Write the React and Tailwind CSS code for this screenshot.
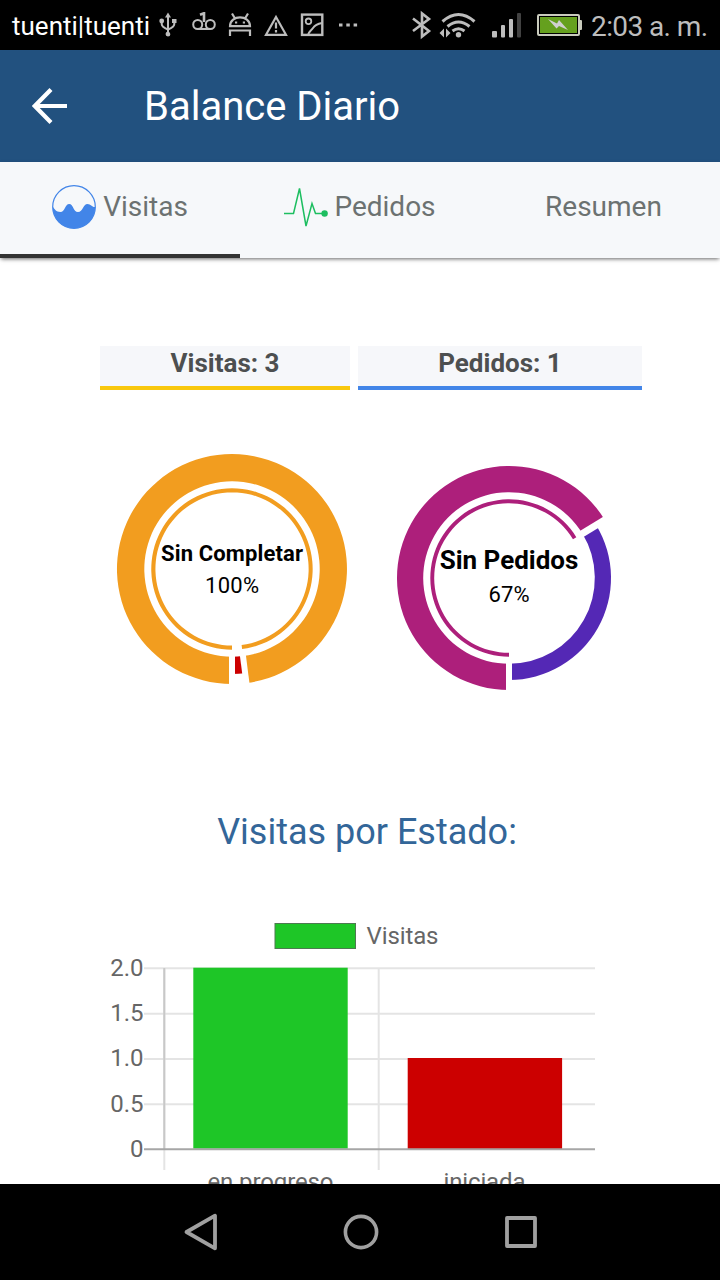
import React from "react";

const rad = (deg) => (deg * Math.PI) / 180;

// Angles are measured clockwise from twelve o'clock.
function point(cx, cy, r, deg) {
  return `${(cx + r * Math.sin(rad(deg))).toFixed(2)} ${(cy - r * Math.cos(rad(deg))).toFixed(2)}`;
}

function sector(cx, cy, inner, outer, from, to) {
  const large = to - from > 180 ? 1 : 0;
  return [
    `M${point(cx, cy, outer, from)}`,
    `A${outer} ${outer} 0 ${large} 1 ${point(cx, cy, outer, to)}`,
    `L${point(cx, cy, inner, to)}`,
    `A${inner} ${inner} 0 ${large} 0 ${point(cx, cy, inner, from)}Z`,
  ].join("");
}

function Cut({ cx, cy, deg, width }) {
  return (
    <path
      d={`M${point(cx, cy, 83, deg)}L${point(cx, cy, 120, deg)}`}
      stroke="#fff"
      strokeWidth={width}
    />
  );
}

function StatusBar() {
  return (
    <header className="flex h-[50px] shrink-0 items-center bg-black pl-3 pr-3 text-[#bdbdbd]">
      <span className="w-[144px] whitespace-nowrap pt-[2px] text-[26px] leading-[50px] text-white">
        tuenti|tuenti
      </span>
      <div className="flex gap-3">
        <svg width="24" height="50" viewBox="0 0 24 50" fill="none" stroke="currentColor" strokeWidth="2">
          <path d="M12 16v17M5.700 21v3q0 3 6.300 5.500M18.300 21v3q0 3-6.300 5.500" />
          <path d="M12 12.500l3 5H9zM16 19h4.500v4H16zM12 31.700a2.400 2.400 0 1 1-.1 4.800a2.400 2.400 0 0 1 .1-4.800" fill="currentColor" stroke="none" />
          <circle cx="5.700" cy="21" r="2.400" fill="currentColor" stroke="none" />
        </svg>
        <svg width="24" height="50" viewBox="0 0 24 50" fill="none" stroke="currentColor" strokeWidth="2">
          <circle cx="5.700" cy="24.500" r="4.500" />
          <circle cx="18.300" cy="24.500" r="4.500" />
          <path d="M5.700 29h12.600" />
          <path d="M8 14.800l3.800-1.500h.2V22" strokeWidth="2.600" />
        </svg>
        <svg width="24" height="50" viewBox="0 0 24 50" fill="none" stroke="currentColor" strokeWidth="2.200">
          <path d="M2 26.200C2 14.500 22 14.500 22 26.200zM4 13.500l3 5M20 13.500l-3 5M2 36v-5.500h20V36" />
          <path d="M7 22.500h2.200M14.800 22.500H17" />
        </svg>
        <svg width="24" height="50" viewBox="0 0 24 50" fill="none" stroke="currentColor" strokeWidth="2.200">
          <path d="M12 17L22 34.800H2zM12 22.500v6M12 30v2.500" />
        </svg>
        <svg width="24" height="50" viewBox="0 0 24 50" fill="none" stroke="currentColor" strokeWidth="2.400">
          <rect x="2" y="14.600" width="20.300" height="20.300" />
          <circle cx="8.500" cy="21.300" r="2.800" strokeWidth="1.800" />
          <path d="M8 35c1-4 3-4 5-7 2-3 4-4 9-5" strokeWidth="2" />
        </svg>
        <svg width="24" height="50" viewBox="0 0 24 50" fill="currentColor">
          <rect x="3" y="23.500" width="3.500" height="3" />
          <rect x="10.300" y="23.500" width="3.500" height="3" />
          <rect x="17.600" y="23.500" width="3.500" height="3" />
        </svg>
      </div>
      <div className="ml-auto flex items-center">
        <svg width="20" height="50" viewBox="0 0 20 50" fill="none" stroke="currentColor" strokeWidth="2.600">
          <path d="M1 18.500l16 12.500-7 5.500V13.500l7 5.500-16 12" />
        </svg>
        <svg className="ml-[7px]" width="38" height="50" viewBox="0 0 38 50" fill="none" stroke="currentColor" strokeWidth="3">
          <path d="M3.500 21.500q16-14 32 0M8.500 26.500q11-9 22 0M13.500 31q6-4.500 12 0" />
          <circle cx="19.500" cy="34.800" r="2.700" fill="currentColor" stroke="none" />
          <path d="M5 28.500v9l-4.500-4.500zM7 28.500v9l4.500-4.500z" fill="currentColor" stroke="none" />
        </svg>
        <svg className="ml-[14px]" width="31" height="50" viewBox="0 0 31 50" fill="currentColor">
          <rect x="1" y="31" width="5" height="6.500" rx="1" />
          <rect x="10" y="25" width="4" height="12.500" rx="1" />
          <rect x="18" y="19" width="4" height="18.500" rx="1" />
          <rect x="26" y="13" width="4" height="24.500" fill="#424242" rx="1" />
        </svg>
        <svg className="ml-[15px]" width="46" height="50" viewBox="0 0 46 50">
          <rect x="1" y="15" width="41" height="20" rx="1" fill="#000" stroke="#c9cbbd" strokeWidth="2" />
          <rect x="3" y="17" width="37" height="16" fill="#65a01e" />
          <rect x="42" y="20" width="3" height="10" rx="1" fill="#c9cbbd" />
          <path d="M11 19l9 4.500 2-3.500 9 10-9-4-2.500 2.500z" fill="#d0d0d0" />
        </svg>
        <span className="ml-[8px] w-[117px] whitespace-nowrap pt-[3px] text-[28px] leading-[48px] tracking-[-0.6px]">2:03 a. m.</span>
      </div>
    </header>
  );
}

function Tabs() {
  return (
    <nav className="z-10 flex h-24 shrink-0 bg-[#f6f8fa] text-[28px] leading-[88px] text-[#6c7271] shadow-[0_2px_4px_-1px_rgba(0,0,0,0.6)]">
      <a className="flex w-60 items-center justify-center gap-[7px] border-b-4 border-[#333] pb-[2px]">
        <svg width="44" height="44" viewBox="0 0 44 44">
          <circle cx="22" cy="22" r="21.300" fill="none" stroke="#4285e8" strokeWidth="1.200" />
          <path d="M.7 21.500C2.500 24 4 27 8.500 27C13 27 13 19 17.200 19C21.500 19 21 27 26 27C31 27 31 19 35.500 19C39 19 40 22.500 43.300 22A21.300 21.300 0 0 1 22 43.300A21.300 21.300 0 0 1 .7 21.500Z" fill="#4285e8" />
        </svg>
        <span>Visitas</span>
      </a>
      <a className="flex w-60 items-center justify-center gap-[6px] border-b-4 border-transparent pb-[2px]">
        <svg width="44" height="44" viewBox="0 0 44 44" fill="none" stroke="#1dbe60" strokeWidth="1.500">
          <path d="M0 28.500h9.500L15.500 3.500 22 41l6-22.500 3.500 10H40" />
          <circle cx="40.600" cy="28.500" r="3.200" fill="#1dbe60" stroke="none" />
        </svg>
        <span>Pedidos</span>
      </a>
      <a className="flex w-60 items-center justify-center border-b-4 border-transparent pb-[2px] pl-[7px]">
        <span>Resumen</span>
      </a>
    </nav>
  );
}

function Donuts() {
  return (
    <svg
      className="mt-[50px] block shrink-0"
      width="720"
      height="260"
      viewBox="0 440 720 260"
      textAnchor="middle"
      fontFamily="Roboto, sans-serif"
    >
      <path d={sector(232, 569, 87.7, 115, 180, 532.8)} fill="#f29d1f" />
      <path d={sector(232, 569, 87.7, 105, 172.8, 180)} fill="#cc0000" />
      <Cut cx={232} cy={569} deg={180} width={6} />
      <Cut cx={232} cy={569} deg={172.8} width={6} />
      <path d={sector(232, 569, 76.6, 80.7, 180, 532.8)} fill="#f29d1f" />
      <text x="232" y="561" fontSize="22" fontWeight="700" textLength="142">Sin Completar</text>
      <text x="232" y="593" fontSize="22" textLength="54">100%</text>

      <path d={sector(509, 578, 85.8, 112, 180, 418.8)} fill="#ad1f7b" />
      <path d={sector(509, 578, 85.8, 102, 58.8, 180)} fill="#5428b5" />
      <Cut cx={509} cy={578} deg={180} width={6} />
      <Cut cx={509} cy={578} deg={58.8} width={7} />
      <path d={sector(509, 578, 74.8, 78.7, 180, 418.8)} fill="#ad1f7b" />
      <text x="509" y="569" fontSize="26" fontWeight="700" textLength="138.500">Sin Pedidos</text>
      <text x="509" y="602" fontSize="22" textLength="41">67%</text>
    </svg>
  );
}

const ticks = [
  ["2.0", 968.3],
  ["1.5", 1013.7],
  ["1.0", 1058.9],
  ["0.5", 1104.2],
];

function BarChart() {
  return (
    <svg
      className="mt-[42px] block shrink-0"
      width="720"
      height="300"
      viewBox="0 900 720 300"
      fontFamily="Roboto, sans-serif"
      fontSize="24"
      fill="#666"
    >
      <rect x="275" y="923.500" width="80.500" height="25" fill="#1ec627" stroke="#4d7a50" />
      <text x="366.500" y="944" textLength="72">Visitas</text>
      <g stroke="#e4e4e4" strokeWidth="2">
        {ticks.map(([label, y]) => (
          <path key={label} d={`M144 ${y}H595`} />
        ))}
        <path d="M164.300 968V1170M378.700 968V1170" />
        <path d="M164.300 968V1149" stroke="#c8c8c8" />
      </g>
      <rect x="193.300" y="967.700" width="154.400" height="181" fill="#1ec627" />
      <rect x="407.700" y="1058" width="154.400" height="91" fill="#cc0000" />
      <path d="M144 1149.300H595" stroke="#a6a6a6" strokeWidth="2" />
      <g textAnchor="end">
        {ticks.map(([label, y]) => (
          <text key={label} x="143.500" y={y + 7.5}>{label}</text>
        ))}
        <text x="143.500" y="1156.800">0</text>
      </g>
      <g textAnchor="middle">
        <text x="270.500" y="1190" textLength="126">en progreso</text>
        <text x="484.500" y="1190" textLength="82">iniciada</text>
      </g>
    </svg>
  );
}

function NavBar() {
  return (
    <footer className="flex h-24 shrink-0 items-center bg-black pl-[183px] text-[#a0a0a0]">
      <svg width="36" height="40" viewBox="0 0 36 40" fill="none" stroke="currentColor" strokeWidth="3.800" strokeLinejoin="round">
        <path d="M3.500 20L32 3.700v32.600z" />
      </svg>
      <svg className="ml-[124px]" width="36" height="40" viewBox="0 0 36 40" fill="none" stroke="currentColor" strokeWidth="3.600">
        <circle cx="18" cy="20" r="15.600" />
      </svg>
      <svg className="ml-[124px]" width="36" height="40" viewBox="0 0 36 40" fill="none" stroke="currentColor" strokeWidth="3.800" strokeLinejoin="round">
        <rect x="4" y="6" width="28" height="28" />
      </svg>
    </footer>
  );
}

export default function App() {
  return (
    <div className="flex h-[1280px] w-[720px] flex-col overflow-hidden bg-white font-[Roboto,sans-serif]">
      <StatusBar />
      <div className="flex h-28 shrink-0 items-center bg-[#22517f] pl-8 text-white">
        <svg width="36" height="40" viewBox="0 0 36 40" fill="none" stroke="currentColor" strokeWidth="4.200">
          <path d="M3 20h32M19 3.500L2.800 20 19 36.500" />
        </svg>
        <h1 className="ml-[76px] pt-[2px] text-[40px] leading-[48px]">Balance Diario</h1>
      </div>
      <Tabs />
      <main className="flex min-h-0 flex-1 flex-col overflow-hidden pt-[88px]">
        <div className="flex gap-2 pl-[100px] text-center text-[26px] font-bold leading-[34px] text-[#4d4f50]">
          <div className="h-11 w-[250px] shrink-0 border-b-4 border-[#f9c80e] bg-[#f6f7fa]">Visitas: 3</div>
          <div className="h-11 w-[284px] shrink-0 border-b-4 border-[#4285e8] bg-[#f6f7fa]">Pedidos: 1</div>
        </div>
        <Donuts />
        <h2 className="mt-[110px] h-12 shrink-0 pl-[14px] text-center text-[36px] leading-[44px] text-[#336699]">
          Visitas por Estado:
        </h2>
        <BarChart />
      </main>
      <NavBar />
    </div>
  );
}
